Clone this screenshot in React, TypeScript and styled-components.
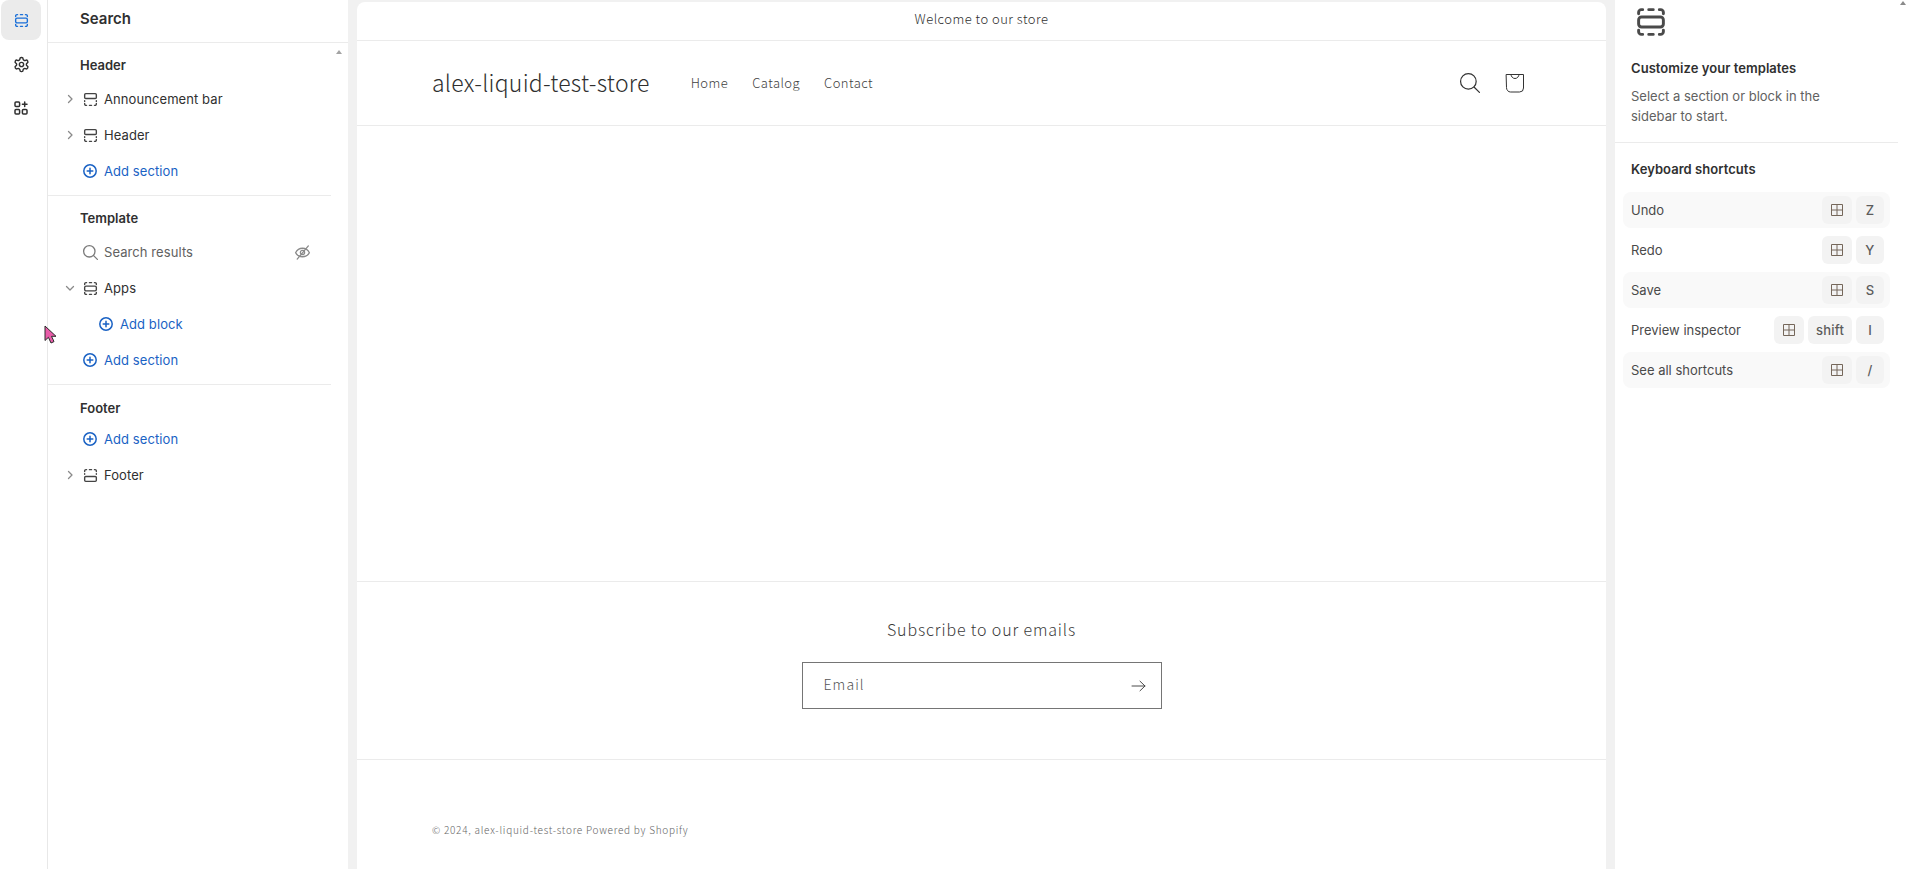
import React from "react";
import styled, { createGlobalStyle } from "styled-components";

const Global = createGlobalStyle`
  html, body { margin: 0; padding: 0; height: 100%; background: #fff; overflow: hidden; }
  * { box-sizing: border-box; }
  body { font-family: Inter, "Liberation Sans", sans-serif; -webkit-font-smoothing: auto; }
`;

const Page = styled.div`
  position: relative;
  display: flex;
  width: 1906px;
  height: 869px;
  overflow: hidden;
  background: #f1f1f1;
`;

const Rail = styled.nav`
  width: 48px;
  flex: none;
  background: #fff;
  border-right: 1px solid #e8e8e8;
  display: flex;
  flex-direction: column;
  align-items: flex-start;
  padding-left: 1px;
  gap: 4px;
`;

const RailButton = styled.div<{ $active?: boolean }>`
  width: 40px;
  height: 40px;
  border-radius: 8px;
  display: flex;
  align-items: center;
  justify-content: center;
  background: ${(p) => (p.$active ? "#ebebeb" : "transparent")};
  color: ${(p) => (p.$active ? "#1a6fd8" : "#303030")};
`;

const Sidebar = styled.aside`
  width: 300px;
  flex: none;
  background: #fff;
  display: flex;
  flex-direction: column;
  position: relative;
`;

const SidebarTitle = styled.div`
  height: 43px;
  padding: 0 0 5px 32px;
  display: flex;
  align-items: center;
  font-size: 15px;
  font-weight: 600;
  color: #303030;
  border-bottom: 1px solid #ebebeb;
`;

const ScrollArrow = styled.div`
  position: absolute;
  width: 0;
  height: 0;
  border-left: 3.5px solid transparent;
  border-right: 3.5px solid transparent;
  border-bottom: 4px solid #a3a3a3;
`;

const SidebarArrow = styled(ScrollArrow)`
  left: 288px;
  top: 50px;
`;

const PanelArrow = styled(ScrollArrow)`
  right: 0;
  top: 1px;
  border-bottom-color: #8a8a8a;
`;

const Tree = styled.div`
  display: flex;
  flex-direction: column;
  width: 283px;
`;

const Group = styled.section<{ $last?: boolean }>`
  padding: ${(p) => (p.$last ? "11px 0 7px" : "10px 0 6px")};
  border-bottom: ${(p) => (p.$last ? "none" : "1px solid #ebebeb")};
`;

const GroupTitle = styled.div<{ $gap?: number }>`
  height: 24px;
  padding-left: 32px;
  display: flex;
  align-items: center;
  font-size: 13px;
  font-weight: 600;
  color: #303030;
  margin-bottom: ${(p) => p.$gap ?? 4}px;
`;

const Row = styled.div<{ $indent?: number; $muted?: boolean; $link?: boolean }>`
  height: 36px;
  display: flex;
  align-items: center;
  padding-left: ${(p) => p.$indent ?? 14}px;
  font-size: 13px;
  letter-spacing: 0.08px;
  color: ${(p) => (p.$link ? "#1a62c4" : p.$muted ? "#616161" : "#303030")};
`;

const Caret = styled.span`
  width: 16px;
  height: 16px;
  margin-right: 2px;
  display: flex;
  color: #8a8a8a;
  flex: none;
`;

const RowIcon = styled.span<{ $color?: string }>`
  width: 20px;
  height: 20px;
  margin-right: 4px;
  display: flex;
  align-items: center;
  justify-content: center;
  flex: none;
  color: ${(p) => p.$color ?? "#444"};
`;

const RowEnd = styled.span`
  margin-left: auto;
  margin-right: 20px;
  display: flex;
  color: #8a8a8a;
`;

const Cursor = styled.svg`
  position: absolute;
  left: 44px;
  top: 325px;
`;

const PreviewWrap = styled.main`
  flex: none;
  width: 1267px;
  padding: 2px 9px 0;
  display: flex;
`;

const Preview = styled.div`
  flex: 1;
  background: #fff;
  border-radius: 8px 8px 0 0;
  display: flex;
  flex-direction: column;
  font-family: "Noto Sans CJK SC", "Noto Sans", sans-serif;
  font-weight: 300;
  color: #4b4b4b;
`;

const Announcement = styled.div`
  height: 39px;
  padding-bottom: 5px;
  display: flex;
  align-items: center;
  justify-content: center;
  font-size: 13px;
  letter-spacing: 0.48px;
  border-bottom: 1px solid #ebebeb;
  color: #2f2f2f;
`;

const StoreHeader = styled.header`
  height: 85px;
  padding: 0 81px 2px 75px;
  display: flex;
  align-items: center;
  border-bottom: 1px solid #ebebeb;
`;

const StoreName = styled.div`
  font-size: 23px;
  letter-spacing: 0.25px;
  margin-right: 41px;
  color: #2f2f2f;
`;

const Nav = styled.div`
  display: flex;
  gap: 24px;
  font-size: 13px;
  letter-spacing: 0.45px;
  color: #3f3f3f;
`;

const HeaderIcons = styled.div`
  margin-left: auto;
  margin-top: 2px;
  display: flex;
  align-items: center;
  gap: 22px;
  color: #333;
`;

const Spacer = styled.div`
  height: 456px;
  border-bottom: 1px solid #ebebeb;
`;

const Newsletter = styled.section`
  height: 178px;
  border-bottom: 1px solid #ebebeb;
  display: flex;
  flex-direction: column;
  align-items: center;
  padding-top: 36px;
`;

const NewsletterTitle = styled.div`
  font-size: 16px;
  line-height: 22px;
  color: #3a3a3a;
  letter-spacing: 0.86px;
`;

const EmailBox = styled.div`
  margin-top: 22px;
  width: 360px;
  height: 47px;
  border: 1px solid #757575;
  display: flex;
  align-items: center;
  justify-content: space-between;
  padding: 0 15px 0 21px;
  font-size: 14px;
  color: #555;
  letter-spacing: 1.1px;
`;

const EmailLabel = styled.span`
  margin-bottom: 4px;
`;

const Copyright = styled.div`
  padding: 60px 0 0 75px;
  font-size: 10px;
  line-height: 20px;
  letter-spacing: 0.74px;
  color: #666;
`;

const Panel = styled.aside`
  flex: none;
  width: 291px;
  background: #fff;
  position: relative;
  display: flex;
  flex-direction: column;
`;

const PanelIcon = styled.div`
  padding: 4px 0 0 18px;
  height: 58px;
  color: #4a4a4a;
`;

const Intro = styled.div`
  padding: 0 16px;
  height: 85px;
  width: 283px;
  border-bottom: 1px solid #ebebeb;
`;

const PanelHeading = styled.div`
  font-size: 13px;
  font-weight: 600;
  line-height: 20px;
  letter-spacing: 0.05px;
  color: #303030;
`;

const IntroText = styled.p`
  margin: 8px 0 0;
  font-size: 13px;
  line-height: 20px;
  color: #616161;
  width: 210px;
`;

const Shortcuts = styled.div`
  padding: 16px 16px 0;
`;

const ShortcutList = styled.div`
  margin: 13px 0 0 -8px;
  width: 267px;
  display: flex;
  flex-direction: column;
  gap: 4px;
`;

const ShortcutRow = styled.div<{ $shade?: boolean }>`
  height: 36px;
  padding: 0 6px 0 8px;
  border-radius: 8px;
  display: flex;
  align-items: center;
  gap: 4px;
  font-size: 13px;
  color: #4a4a4a;
  background: ${(p) => (p.$shade ? "#f9f9f9" : "transparent")};
`;

const ShortcutLabel = styled.span`
  margin-right: auto;
`;

const Key = styled.span<{ $wide?: boolean }>`
  height: 28px;
  min-width: 28px;
  padding: ${(p) => (p.$wide ? "0 8px" : "0")};
  border-radius: 6px;
  background: #f3f3f3;
  display: flex;
  align-items: center;
  justify-content: center;
  font-size: 13px;
  font-weight: 500;
  letter-spacing: 0.2px;
  color: #5c5c5c;
`;

const WinKey = styled(Key)`
  width: 30px;
`;

const Chevron = ({ open }: { open?: boolean }) => (
  <svg width="16" height="16" viewBox="0 0 16 16" fill="none" stroke="currentColor" strokeWidth="1.3" strokeLinecap="round" strokeLinejoin="round">
    {open ? <path d="M4.5 6.5 8 10l3.5-3.5" /> : <path d="M6.5 4.5 10 8l-3.5 3.5" />}
  </svg>
);

const SectionIcon = ({ size = 17, sw = 1.3 }: { size?: number; sw?: number }) => (
  <svg width={size} height={size} viewBox="0 0 16 16" fill="none" stroke="currentColor" strokeWidth={sw} strokeLinecap="round">
    <path d="M4.3 2.5h-.6a1.2 1.2 0 0 0-1.2 1.2v.6M7 2.5h2M11.7 2.5h.6a1.2 1.2 0 0 1 1.2 1.2v.6M4.3 13.5h-.6a1.2 1.2 0 0 1-1.2-1.2v-.6M7 13.5h2M11.7 13.5h.6a1.2 1.2 0 0 0 1.2-1.2v-.6" />
    <rect x="2.5" y="5.8" width="11" height="4.4" rx="1.3" />
  </svg>
);

const TopSectionIcon = () => (
  <svg width="17" height="17" viewBox="0 0 16 16" fill="none" stroke="currentColor" strokeWidth="1.3" strokeLinecap="round">
    <rect x="2.5" y="2.5" width="11" height="4.6" rx="1" />
    <path d="M2.5 9.2v.6M13.5 9.2v.6M2.5 11.8v.5a1.2 1.2 0 0 0 1.2 1.2h.6M7 13.5h2M11.7 13.5h.6a1.2 1.2 0 0 0 1.2-1.2v-.5" />
  </svg>
);

const BottomSectionIcon = () => (
  <svg width="17" height="17" viewBox="0 0 16 16" fill="none" stroke="currentColor" strokeWidth="1.3" strokeLinecap="round">
    <path d="M4.3 2.5h-.6a1.2 1.2 0 0 0-1.2 1.2v.5M7 2.5h2M11.7 2.5h.6a1.2 1.2 0 0 1 1.2 1.2v.5M2.5 6.2v.6M13.5 6.2v.6" />
    <rect x="2.5" y="8.9" width="11" height="4.6" rx="1" />
  </svg>
);

const PlusCircle = () => (
  <svg width="16" height="16" viewBox="0 0 16 16" fill="none" stroke="currentColor" strokeWidth="1.5" strokeLinecap="round">
    <circle cx="8" cy="8" r="6.2" />
    <path d="M8 5.2v5.6M5.2 8h5.6" />
  </svg>
);

const SearchIcon = ({ size = 19, sw = 1.1 }: { size?: number; sw?: number }) => (
  <svg width={size} height={size} viewBox="0 0 16 16" fill="none" stroke="currentColor" strokeWidth={sw} strokeLinecap="round">
    <circle cx="7" cy="7" r="4.8" />
    <path d="m10.6 10.6 3.2 3.2" />
  </svg>
);

const EyeOff = () => (
  <svg width="17" height="17" viewBox="0 0 16 16" fill="none" stroke="currentColor" strokeWidth="1.2" strokeLinecap="round">
    <path d="M1.5 8.2C2.8 5.6 5.2 4 8 4s5.2 1.6 6.5 4.2C13.2 10.6 10.8 12 8 12s-5.2-1.4-6.5-3.8Z" />
    <circle cx="8" cy="8" r="2" />
    <path d="M13.5 1.8 3 14.2" />
  </svg>
);

const GearIcon = () => (
  <svg width="17" height="17" viewBox="0 0 24 24" fill="none" stroke="currentColor" strokeWidth="2" strokeLinejoin="round">
    <path d="M12.22 2h-.44a2 2 0 0 0-2 2v.18a2 2 0 0 1-1 1.73l-.43.25a2 2 0 0 1-2 0l-.15-.08a2 2 0 0 0-2.73.73l-.22.38a2 2 0 0 0 .73 2.73l.15.1a2 2 0 0 1 1 1.72v.51a2 2 0 0 1-1 1.74l-.15.09a2 2 0 0 0-.73 2.73l.22.38a2 2 0 0 0 2.73.73l.15-.08a2 2 0 0 1 2 0l.43.25a2 2 0 0 1 1 1.73V20a2 2 0 0 0 2 2h.44a2 2 0 0 0 2-2v-.18a2 2 0 0 1 1-1.73l.43-.25a2 2 0 0 1 2 0l.15.08a2 2 0 0 0 2.73-.73l.22-.39a2 2 0 0 0-.73-2.73l-.15-.08a2 2 0 0 1-1-1.74v-.5a2 2 0 0 1 1-1.74l.15-.09a2 2 0 0 0 .73-2.73l-.22-.38a2 2 0 0 0-2.73-.73l-.15.08a2 2 0 0 1-2 0l-.43-.25a2 2 0 0 1-1-1.73V4a2 2 0 0 0-2-2Z" />
    <circle cx="12" cy="12" r="3" />
  </svg>
);

const AppsIcon = () => (
  <svg width="16" height="16" viewBox="0 0 16 16" fill="none" stroke="currentColor" strokeWidth="1.5" strokeLinecap="round">
    <rect x="2" y="2" width="4.6" height="4.6" rx="1" />
    <rect x="2" y="9.4" width="4.6" height="4.6" rx="1" />
    <rect x="9.4" y="9.4" width="4.6" height="4.6" rx="1" />
    <path d="M11.7 2v4.6M9.4 4.3H14" />
  </svg>
);

const WinIcon = () => (
  <svg width="12" height="12" viewBox="0 0 12 12" fill="none" strokeWidth="1">
    <path d="M.5.5h11v11H.5zM6 .5v11M.5 6h11" stroke="#75675a" />
  </svg>
);

const BagIcon = () => (
  <svg width="20" height="20" viewBox="0 0 20 20" fill="none" stroke="currentColor" strokeWidth="1" strokeLinecap="round">
    <path d="M1.5 1.5h17v13.5a4 4 0 0 1-4 4h-9a4 4 0 0 1-4-4Z" />
    <path d="M6 1.5a4 4 0 0 0 8 0" />
  </svg>
);

const ArrowIcon = () => (
  <svg width="15" height="12" viewBox="0 0 15 12" fill="none" stroke="#4a4a4a" strokeWidth="1" strokeLinecap="round">
    <path d="M1 6h13M9 1.2 14 6l-5 4.8" />
  </svg>
);

const AddRow = ({ label, indent }: { label: string; indent?: number }) => (
  <Row $link $indent={indent ?? 32}>
    <RowIcon $color="#1a62c4"><PlusCircle /></RowIcon>
    {label}
  </Row>
);

const shortcuts = [
  { label: "Undo", keys: ["Z"], shade: true },
  { label: "Redo", keys: ["Y"], shade: false },
  { label: "Save", keys: ["S"], shade: true },
  { label: "Preview inspector", keys: ["shift", "I"], shade: false },
  { label: "See all shortcuts", keys: ["/"], shade: true },
];

export default function App() {
  return (
    <>
      <Global />
      <Page>
        <Rail>
          <RailButton $active><SectionIcon /></RailButton>
          <RailButton><GearIcon /></RailButton>
          <RailButton><AppsIcon /></RailButton>
        </Rail>
        <Sidebar>
          <SidebarTitle>Search</SidebarTitle>
          <SidebarArrow />
          <Tree>
            <Group>
              <GroupTitle>Header</GroupTitle>
              <Row>
                <Caret><Chevron /></Caret>
                <RowIcon><TopSectionIcon /></RowIcon>
                Announcement bar
              </Row>
              <Row>
                <Caret><Chevron /></Caret>
                <RowIcon><TopSectionIcon /></RowIcon>
                Header
              </Row>
              <AddRow label="Add section" />
            </Group>
            <Group>
              <GroupTitle>Template</GroupTitle>
              <Row $muted $indent={32}>
                <RowIcon $color="#7a7a7a"><SearchIcon /></RowIcon>
                Search results
                <RowEnd><EyeOff /></RowEnd>
              </Row>
              <Row>
                <Caret><Chevron open /></Caret>
                <RowIcon><SectionIcon /></RowIcon>
                Apps
              </Row>
              <AddRow label="Add block" indent={48} />
              <AddRow label="Add section" />
            </Group>
            <Group $last>
              <GroupTitle $gap={1}>Footer</GroupTitle>
              <AddRow label="Add section" />
              <Row>
                <Caret><Chevron /></Caret>
                <RowIcon><BottomSectionIcon /></RowIcon>
                Footer
              </Row>
            </Group>
          </Tree>
        </Sidebar>
        <PreviewWrap>
          <Preview>
            <Announcement>Welcome to our store</Announcement>
            <StoreHeader>
              <StoreName>alex-liquid-test-store</StoreName>
              <Nav>
                <span>Home</span>
                <span>Catalog</span>
                <span>Contact</span>
              </Nav>
              <HeaderIcons>
                <SearchIcon size={26} sw={0.75} />
                <BagIcon />
              </HeaderIcons>
            </StoreHeader>
            <Spacer />
            <Newsletter>
              <NewsletterTitle>Subscribe to our emails</NewsletterTitle>
              <EmailBox>
                <EmailLabel>Email</EmailLabel>
                <ArrowIcon />
              </EmailBox>
            </Newsletter>
            <Copyright>© 2024, alex-liquid-test-store Powered by Shopify</Copyright>
          </Preview>
        </PreviewWrap>
        <Panel>
          <PanelArrow />
          <PanelIcon><SectionIcon size={36} sw={1.3} /></PanelIcon>
          <Intro>
            <PanelHeading>Customize your templates</PanelHeading>
            <IntroText>Select a section or block in the sidebar to start.</IntroText>
          </Intro>
          <Shortcuts>
            <PanelHeading>Keyboard shortcuts</PanelHeading>
            <ShortcutList>
              {shortcuts.map((s) => (
                <ShortcutRow key={s.label} $shade={s.shade}>
                  <ShortcutLabel>{s.label}</ShortcutLabel>
                  <WinKey><WinIcon /></WinKey>
                  {s.keys.map((k) => (
                    <Key key={k} $wide={k.length > 1}>{k}</Key>
                  ))}
                </ShortcutRow>
              ))}
            </ShortcutList>
          </Shortcuts>
        </Panel>
        <Cursor width="16" height="20" viewBox="0 0 16 20">
          <path d="M1 1v14.5l3.4-3.2L7 18l3-1.4-2.5-5.3H12Z" fill="#e85ca8" stroke="#2b2b2b" strokeWidth="1" strokeLinejoin="round" />
        </Cursor>
      </Page>
    </>
  );
}
